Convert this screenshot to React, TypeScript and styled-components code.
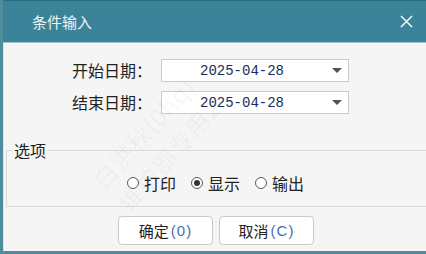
import React, {useState} from 'react'
import styled, {createGlobalStyle} from 'styled-components'

const GlobalStyle = createGlobalStyle`
  html, body {
    margin: 0;
    padding: 0;
    background: #f5f5f5;
  }
  body {
    font-family: "Noto Sans CJK SC", "Noto Sans", sans-serif;
  }
`

const Dialog = styled.div`
  width: 426px;
  height: 254px;
  box-sizing: border-box;
  display: flex;
  flex-direction: column;
  border-left: 3px solid #4d8d9e;
  border-bottom: 3px solid #4d8d9e;
  overflow: hidden;
`

const TitleBar = styled.div`
  height: 43px;
  flex: none;
  box-sizing: border-box;
  display: flex;
  align-items: center;
  padding-left: 29px;
  padding-right: 13px;
  background: #3a8399;
  border-top: 1px solid #2c6e81;
  border-bottom: 1px solid #9cc2cc;
`

const Title = styled.span`
  flex: 1;
  color: #eef5f7;
  font-size: 15px;
  line-height: 20px;
`

const CloseButton = styled.button`
  width: 14px;
  height: 14px;
  padding: 0;
  border: none;
  background: transparent;
  display: flex;
  align-items: center;
  justify-content: center;
  cursor: pointer;
`

const Body = styled.div`
  position: relative;
  flex: 1;
  display: flex;
  flex-direction: column;
  background: #f5f5f5;
  border-left: 1px solid #dde3e5;
`

const Form = styled.div`
  display: grid;
  grid-template-columns: 80px 188px;
  column-gap: 9px;
  row-gap: 9px;
  margin: 16px 0 0 68px;
`

const Label = styled.span`
  font-size: 16px;
  line-height: 23px;
  color: #222;
  white-space: nowrap;
`

const DateSelect = styled.div`
  height: 23px;
  box-sizing: border-box;
  display: flex;
  align-items: center;
  background: #fff;
  border: 1px solid #cbcbcb;
  padding: 0 5px 0 38px;
`

const DateText = styled.span`
  flex: 1;
  font-family: "Liberation Mono", "DejaVu Sans Mono", monospace;
  font-size: 14px;
  color: #1c2a5a;
`

const Caret = styled.span`
  width: 0;
  height: 0;
  border-left: 5px solid transparent;
  border-right: 5px solid transparent;
  border-top: 5px solid #4a574b;
  margin-right: 1px;
`

const Group = styled.fieldset`
  margin: 27px 0 0 2px;
  padding: 0 8px 0 6px;
  border: 1px solid #dadada;
  border-right: none;
  min-width: 0;
`

const Legend = styled.legend`
  padding: 0 1px;
  font-size: 16px;
  line-height: 18px;
  color: #222;
`

const RadioRow = styled.div`
  display: flex;
  justify-content: center;
  gap: 15px;
  margin: 15px 0 14px;
`

const RadioItem = styled.label`
  display: flex;
  align-items: center;
  gap: 5px;
  font-size: 16px;
  line-height: 18px;
  color: #222;
  cursor: pointer;
`

const RadioCircle = styled.span<{checked: boolean}>`
  width: 12px;
  height: 12px;
  box-sizing: border-box;
  border-radius: 50%;
  border: 1px solid #5a5a5a;
  background: #fff;
  display: flex;
  align-items: center;
  justify-content: center;

  &::after {
    content: '';
    width: 6px;
    height: 6px;
    border-radius: 50%;
    background: ${(props) => (props.checked ? '#333' : 'transparent')};
  }
`

const ButtonRow = styled.div`
  display: flex;
  justify-content: center;
  gap: 6px;
  margin-top: 9px;
  padding-left: 2px;
`

const Button = styled.button`
  width: 95px;
  height: 29px;
  box-sizing: border-box;
  background: #fff;
  border: 1px solid #cacaca;
  border-radius: 4px;
  font-family: "Noto Sans CJK SC", sans-serif;
  font-size: 15px;
  color: #222;
  display: flex;
  align-items: center;
  justify-content: center;
  padding: 0;
  cursor: pointer;
`

const Hotkey = styled.span`
  font-family: "Liberation Sans", sans-serif;
  font-size: 15px;
  letter-spacing: 1px;
  margin-left: 2px;
  color: #4a6cb3;
`

const Watermark = styled.div`
  position: absolute;
  left: 42px;
  top: 26px;
  width: 220px;
  height: 150px;
  pointer-events: none;
  transform: rotate(-48deg);
  display: flex;
  flex-direction: column;
  justify-content: center;
  align-items: center;
  gap: 8px;
  color: rgba(0, 0, 0, 0.045);
  font-size: 24px;
  line-height: 26px;
  letter-spacing: 1px;
  white-space: nowrap;
`

const options = ['打印', '显示', '输出']

export default function App() {
  const [choice, setChoice] = useState('显示')

  return (
    <>
      <GlobalStyle />
      <Dialog>
        <TitleBar>
          <Title>条件输入</Title>
          <CloseButton aria-label="关闭">
            <svg width="13" height="13" viewBox="0 0 13 13">
              <path d="M1 1 L12 12 M12 1 L1 12" stroke="#eef5f7" strokeWidth="1.6" />
            </svg>
          </CloseButton>
        </TitleBar>
        <Body>
          <Watermark>
            <span>白洪秋(0hq)</span>
            <span>维护部专用2</span>
          </Watermark>
          <Form>
            <Label>开始日期：</Label>
            <DateSelect>
              <DateText>2025-04-28</DateText>
              <Caret />
            </DateSelect>
            <Label>结束日期：</Label>
            <DateSelect>
              <DateText>2025-04-28</DateText>
              <Caret />
            </DateSelect>
          </Form>
          <Group>
            <Legend>选项</Legend>
            <RadioRow>
              {options.map((o) => (
                <RadioItem key={o} onClick={() => setChoice(o)}>
                  <RadioCircle checked={choice === o} />
                  {o}
                </RadioItem>
              ))}
            </RadioRow>
          </Group>
          <ButtonRow>
            <Button>
              确定<Hotkey>(0)</Hotkey>
            </Button>
            <Button>
              取消<Hotkey>(C)</Hotkey>
            </Button>
          </ButtonRow>
        </Body>
      </Dialog>
    </>
  )
}
